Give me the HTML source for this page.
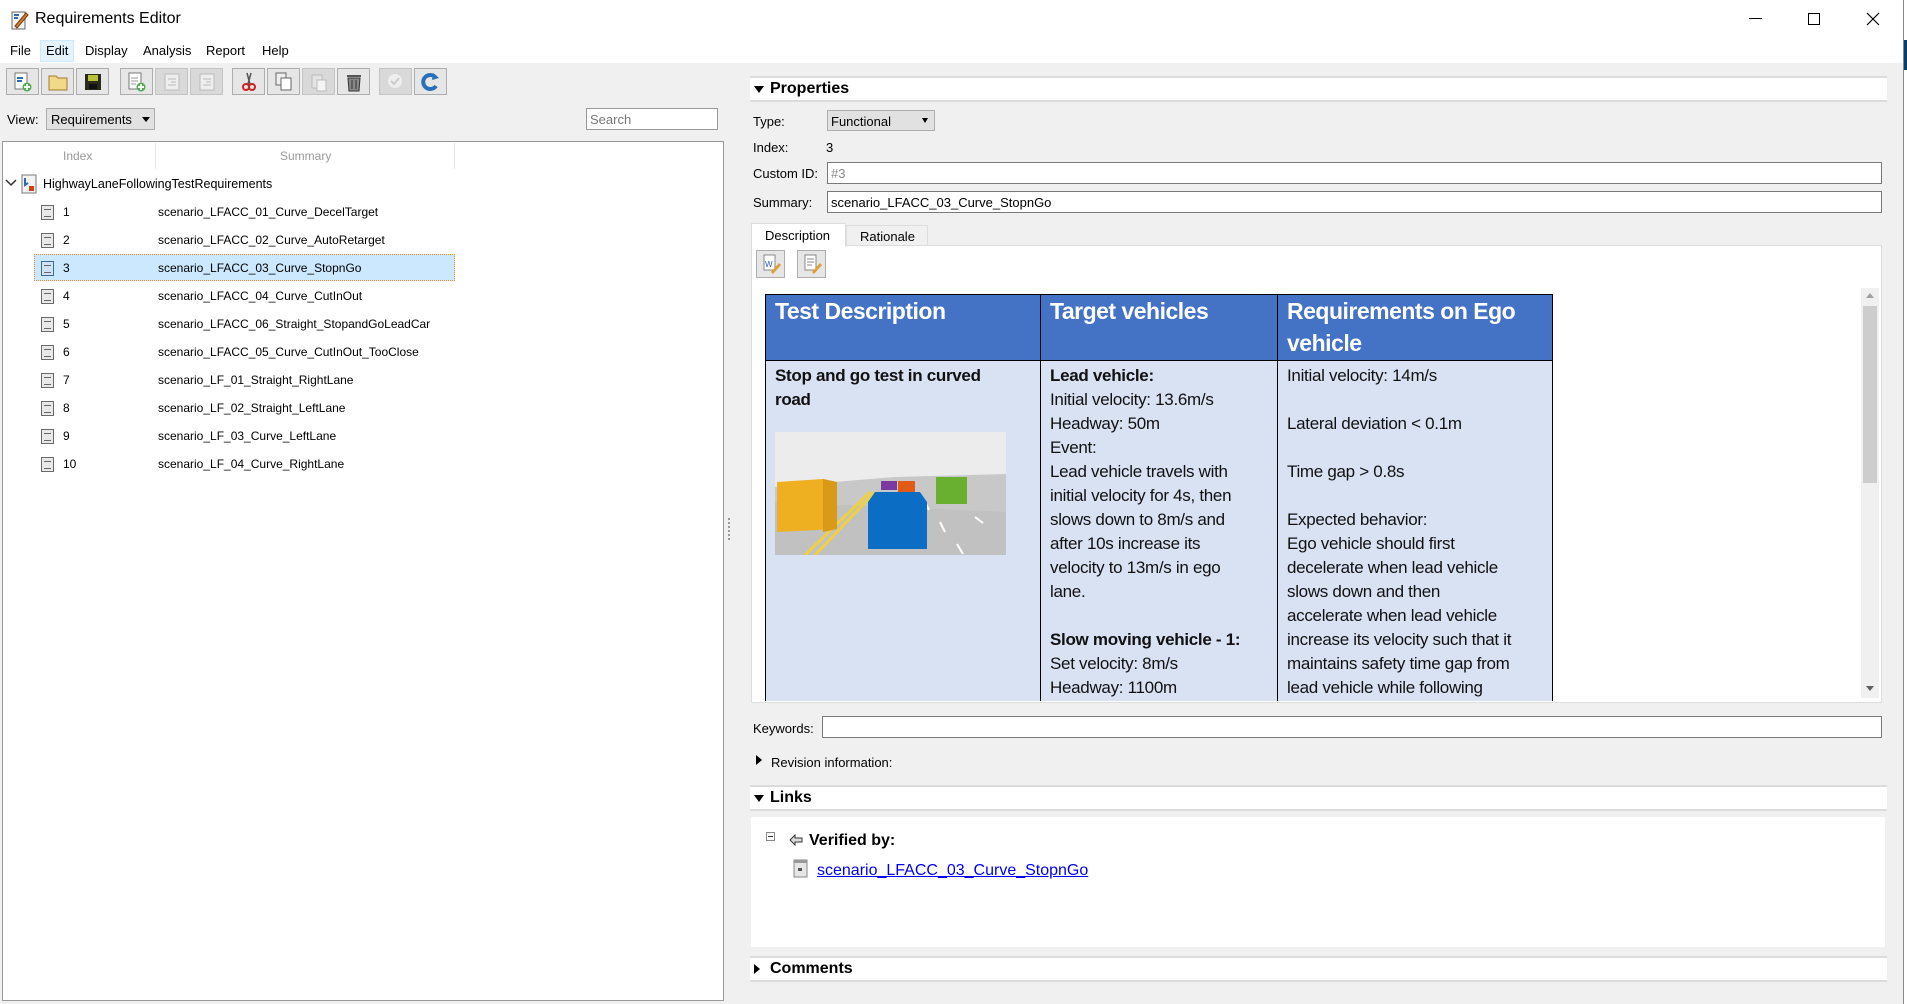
<!DOCTYPE html>
<html><head><meta charset="utf-8"><style>
*{box-sizing:border-box;margin:0;padding:0}
body{width:1907px;height:1004px;position:relative;overflow:hidden;background:#f0f0f0;font-family:"Liberation Sans",sans-serif;font-size:13px;color:#000}
.a{position:absolute;white-space:nowrap}
.btn{position:absolute;top:68px;width:33px;height:27px;border:1px solid #adadad;background:#e6e6e6}
.btn.d{background:#d9d9d9;border-color:#c4c4c4}
.btn svg{position:absolute;left:6px;top:3px}
.row{position:absolute;left:0;height:28px;width:720px;font-size:12px}
.row .ic{position:absolute;left:41px;top:7px;width:13px;height:15px;background:#e8e8e8;border:1px solid #6b6b6b}
.row .ic:after{content:"";position:absolute;left:2px;top:3px;width:7px;height:6px;border-top:1px solid #666;border-bottom:1px solid #666}
.row .n{position:absolute;left:63px;top:7px}
.row .s{position:absolute;left:158px;top:7px}
.inp{position:absolute;background:#fff;border:1px solid #7a7a7a}
.band{position:absolute;left:750px;width:1137px;height:26px;background:#fff;border-top:2px solid #dcdcdc;border-bottom:2px solid #dcdcdc;font-weight:bold;font-size:16px}
.tri{position:absolute;width:0;height:0}
td{vertical-align:top}
.tb{font-size:17px;line-height:24px;color:#111;letter-spacing:-0.3px}
</style></head><body>
<div class="a" style="left:0;top:0;width:1903px;height:63px;background:#fff"></div>
<div class="a" style="left:1903px;top:0;width:4px;height:1004px;background:#fff;border-left:1px solid #888"></div>
<div class="a" style="left:1904px;top:40px;width:3px;height:30px;background:#0b3d6b"></div>
<svg class="a" style="left:10px;top:9px" width="20" height="22"><rect x="2" y="3" width="13" height="17" fill="#f4f4f4" stroke="#666"/><path d="M5 17 L16 4 L18 6 L7 19Z" fill="#d08030" stroke="#7a3a10"/><path d="M4 6 L9 6 M4 9 L8 9" stroke="#2a6ac0" stroke-width="2"/></svg>
<div class="a" style="left:35px;top:10px;font-size:16px">Requirements Editor</div>
<div class="a" style="left:1749px;top:18px;width:13px;height:1px;background:#000"></div>
<div class="a" style="left:1808px;top:13px;width:12px;height:12px;border:1px solid #000"></div>
<svg class="a" style="left:1866px;top:12px" width="14" height="14"><path d="M1 1L13 13M13 1L1 13" stroke="#000" stroke-width="1.2"/></svg>
<div class="a" style="left:40px;top:40px;width:34px;height:22px;background:#e5f3ff;border:1px solid #cce8ff"></div>
<div class="a" style="left:10px;top:43px;font-size:13px">File</div>
<div class="a" style="left:46px;top:43px;font-size:13px">Edit</div>
<div class="a" style="left:85px;top:43px;font-size:13px">Display</div>
<div class="a" style="left:143px;top:43px;font-size:13px">Analysis</div>
<div class="a" style="left:206px;top:43px;font-size:13px">Report</div>
<div class="a" style="left:262px;top:43px;font-size:13px">Help</div>
<div class="btn" style="left:6px"><svg width="20" height="20"><rect x="2" y="1" width="12" height="16" fill="#fff" stroke="#777"/><path d="M4 6h6M4 9h5" stroke="#2a6ac0" stroke-width="2"/><circle cx="14" cy="15" r="4.5" fill="#4caf50"/><path d="M14 12v6M11 15h6" stroke="#fff" stroke-width="2"/></svg></div>
<div class="btn" style="left:41px"><svg width="20" height="20"><path d="M1 4h7l2 2h9v12H1z" fill="#f2d98a" stroke="#a07a30"/></svg></div>
<div class="btn" style="left:76px"><svg width="20" height="20"><rect x="2" y="2" width="16" height="16" fill="#2b2b1a"/><rect x="5" y="3" width="10" height="6" fill="#b8c040"/><rect x="6" y="12" width="8" height="5" fill="#111"/></svg></div>
<div class="btn" style="left:120px"><svg width="20" height="20"><rect x="2" y="1" width="12" height="16" fill="#fff" stroke="#777"/><path d="M4 6h7M4 9h7M4 12h5" stroke="#999"/><circle cx="14" cy="15" r="4.5" fill="#4caf50"/><path d="M14 12v6M11 15h6" stroke="#fff" stroke-width="2"/></svg></div>
<div class="btn d" style="left:155px"><svg width="20" height="20"><rect x="3" y="2" width="14" height="16" fill="#eee" stroke="#bbb"/><path d="M6 7h8M9 10h5M6 13h8" stroke="#bbb"/></svg></div>
<div class="btn d" style="left:190px"><svg width="20" height="20"><rect x="3" y="2" width="14" height="16" fill="#eee" stroke="#bbb"/><path d="M6 7h8M9 10h5M6 13h8" stroke="#bbb"/></svg></div>
<div class="btn" style="left:232px"><svg width="20" height="20"><path d="M8 1L11 12M12 1L9 12" stroke="#555" stroke-width="1.5"/><circle cx="7" cy="15" r="3" fill="none" stroke="#c22" stroke-width="2"/><circle cx="13" cy="15" r="3" fill="none" stroke="#c22" stroke-width="2"/></svg></div>
<div class="btn" style="left:267px"><svg width="20" height="20"><rect x="2" y="1" width="10" height="12" fill="#eee" stroke="#666"/><rect x="7" y="6" width="10" height="12" fill="#fff" stroke="#666"/></svg></div>
<div class="btn d" style="left:302px"><svg width="20" height="20"><rect x="3" y="3" width="10" height="13" fill="#e4e4e4" stroke="#bbb"/><rect x="8" y="8" width="9" height="11" fill="#f4f4f4" stroke="#bbb"/></svg></div>
<div class="btn" style="left:337px"><svg width="20" height="20"><rect x="3" y="3" width="14" height="2" fill="#555"/><path d="M4 6h12l-1 13H5z" fill="#888" stroke="#333"/><path d="M8 8v9M12 8v9" stroke="#333"/></svg></div>
<div class="btn d" style="left:379px"><svg width="20" height="20"><circle cx="9" cy="9" r="7" fill="#eee"/><path d="M5 9l3 3 5-6" stroke="#ccc" stroke-width="2" fill="none"/></svg></div>
<div class="btn" style="left:414px"><svg width="20" height="20"><path d="M15 6A7 7 0 1 0 15 14" stroke="#2a70b8" stroke-width="4" fill="none"/><path d="M12 1l6 5-7 2z" fill="#2a70b8"/></svg></div>
<div class="a" style="left:7px;top:112px">View:</div>
<div class="a" style="left:46px;top:108px;width:109px;height:22px;background:#e1e1e1;border:1px solid #adadad"></div>
<div class="a" style="left:51px;top:112px">Requirements</div>
<div class="tri a" style="left:142px;top:117px;border-left:4px solid transparent;border-right:4px solid transparent;border-top:5px solid #000"></div>
<div class="inp" style="left:586px;top:108px;width:132px;height:22px;border-color:#999"></div>
<div class="a" style="left:590px;top:112px;color:#777">Search</div>
<div class="a" style="left:2px;top:141px;width:722px;height:860px;background:#fff;border:1px solid #999"></div>
<div class="a" style="left:155px;top:143px;width:1px;height:26px;background:#e5e5e5"></div>
<div class="a" style="left:454px;top:143px;width:1px;height:26px;background:#e5e5e5"></div>
<div class="a" style="left:63px;top:149px;color:#999;font-size:12px">Index</div>
<div class="a" style="left:280px;top:149px;color:#999;font-size:12px">Summary</div>
<svg class="a" style="left:5px;top:178px" width="12" height="10"><path d="M1 2l5 5 5-5" stroke="#333" stroke-width="1.5" fill="none"/></svg>
<svg class="a" style="left:21px;top:174px" width="18" height="20"><rect x="1" y="1" width="14" height="18" fill="#f4f4f4" stroke="#777"/><path d="M4 4v7l3-2" stroke="#2a6ac0" stroke-width="2" fill="none"/><rect x="8" y="12" width="5" height="5" fill="#d04010"/></svg>
<div class="a" style="left:43px;top:177px;font-size:12.5px">HighwayLaneFollowingTestRequirements</div>
<div class="a" style="left:34px;top:254px;width:421px;height:27px;background:#cce8ff;border:1px dotted #e08a30"></div>
<div class="row" style="top:198px"><div class="ic"></div><span class="n">1</span><span class="s">scenario_LFACC_01_Curve_DecelTarget</span></div>
<div class="row" style="top:226px"><div class="ic"></div><span class="n">2</span><span class="s">scenario_LFACC_02_Curve_AutoRetarget</span></div>
<div class="row" style="top:254px"><div class="ic" style="background:#cfe3f5;border-color:#3a6a9a"></div><span class="n">3</span><span class="s">scenario_LFACC_03_Curve_StopnGo</span></div>
<div class="row" style="top:282px"><div class="ic"></div><span class="n">4</span><span class="s">scenario_LFACC_04_Curve_CutInOut</span></div>
<div class="row" style="top:310px"><div class="ic"></div><span class="n">5</span><span class="s">scenario_LFACC_06_Straight_StopandGoLeadCar</span></div>
<div class="row" style="top:338px"><div class="ic"></div><span class="n">6</span><span class="s">scenario_LFACC_05_Curve_CutInOut_TooClose</span></div>
<div class="row" style="top:366px"><div class="ic"></div><span class="n">7</span><span class="s">scenario_LF_01_Straight_RightLane</span></div>
<div class="row" style="top:394px"><div class="ic"></div><span class="n">8</span><span class="s">scenario_LF_02_Straight_LeftLane</span></div>
<div class="row" style="top:422px"><div class="ic"></div><span class="n">9</span><span class="s">scenario_LF_03_Curve_LeftLane</span></div>
<div class="row" style="top:450px"><div class="ic"></div><span class="n">10</span><span class="s">scenario_LF_04_Curve_RightLane</span></div>
<div class="a" style="left:728px;top:518px;width:2px;height:22px;border-left:2px dotted #999"></div>
<div class="band" style="top:76px"><div class="tri a" style="left:4px;top:8px;border-left:5px solid transparent;border-right:5px solid transparent;border-top:7px solid #000"></div><span class="a" style="left:20px;top:2px">Properties</span></div>
<div class="a" style="left:753px;top:114px">Type:</div>
<div class="a" style="left:827px;top:110px;width:108px;height:21px;background:#e1e1e1;border:1px solid #adadad"></div>
<div class="a" style="left:831px;top:114px">Functional</div>
<div class="tri a" style="left:922px;top:118px;border-left:3px solid transparent;border-right:3px solid transparent;border-top:5px solid #000"></div>
<div class="a" style="left:753px;top:140px">Index:</div>
<div class="a" style="left:826px;top:140px">3</div>
<div class="a" style="left:753px;top:166px">Custom ID:</div>
<div class="inp" style="left:827px;top:162px;width:1055px;height:22px"></div>
<div class="a" style="left:831px;top:166px;color:#888">#3</div>
<div class="a" style="left:753px;top:195px">Summary:</div>
<div class="inp" style="left:827px;top:191px;width:1055px;height:22px"></div>
<div class="a" style="left:831px;top:195px">scenario_LFACC_03_Curve_StopnGo</div>
<div class="a" style="left:751px;top:245px;width:1131px;height:458px;background:#fff;border:1px solid #ddd"></div>
<div class="a" style="left:751px;top:223px;width:95px;height:24px;background:#fff;border:1px solid #ddd;border-bottom:none"></div>
<div class="a" style="left:846px;top:225px;width:82px;height:21px;background:#f0f0f0;border:1px solid #ddd"></div>
<div class="a" style="left:765px;top:228px">Description</div>
<div class="a" style="left:860px;top:229px">Rationale</div>
<div class="a" style="left:756px;top:250px;width:29px;height:28px;background:#e6e6e6;border:1px solid #adadad"></div>
<div class="a" style="left:797px;top:250px;width:29px;height:28px;background:#e6e6e6;border:1px solid #adadad"></div>
<svg class="a" style="left:762px;top:253px" width="20" height="22"><rect x="2" y="2" width="11" height="15" fill="#fff" stroke="#888"/><text x="3" y="14" font-size="8" fill="#2a5ab8" font-family="Liberation Sans">W</text><path d="M9 19l8-9 2 2-8 9z" fill="#e0a030"/></svg>
<svg class="a" style="left:803px;top:253px" width="20" height="22"><rect x="2" y="2" width="11" height="15" fill="#fff" stroke="#888"/><path d="M4 6h7M4 9h7M4 12h5" stroke="#888"/><path d="M9 19l8-9 2 2-8 9z" fill="#e0a030"/></svg>
<div class="a" style="left:1861px;top:288px;width:18px;height:410px;background:#f0f0f0"></div>
<div class="a" style="left:1863px;top:306px;width:14px;height:177px;background:#cdcdcd"></div>
<div class="tri a" style="left:1866px;top:293px;border-left:4px solid transparent;border-right:4px solid transparent;border-bottom:5px solid #a0a0a0"></div>
<div class="tri a" style="left:1866px;top:686px;border-left:4px solid transparent;border-right:4px solid transparent;border-top:5px solid #606060"></div>
<div class="a" style="left:765px;top:294px;width:788px;height:407px;overflow:hidden">
<table style="border-collapse:collapse;width:787px;table-layout:fixed">
<colgroup><col style="width:275px"><col style="width:237px"><col style="width:275px"></colgroup>
<tr style="background:#4472c4;color:#fff;font-weight:bold;font-size:23px;line-height:32px;height:66px">
<td style="border:1px solid #000;padding:0 9px;letter-spacing:-0.5px">Test Description</td>
<td style="border:1px solid #000;padding:0 9px;letter-spacing:-0.5px">Target vehicles</td>
<td style="border:1px solid #000;padding:0 9px;letter-spacing:-0.5px">Requirements on Ego<br>vehicle</td></tr>
<tr style="background:#d9e2f3;height:400px">
<td class="tb" style="border:1px solid #000;padding:3px 9px"><b>Stop and go test in curved<br>road</b><br>
<svg style="margin-top:20px" width="231" height="123"><rect width="231" height="123" fill="#ececec"/><path d="M0 55 L120 45 L231 42 L231 123 L0 123Z" fill="#c8c8c8"/><path d="M0 70 L231 80 L231 123 L0 123Z" fill="#bdbdbd" opacity=".6"/><path d="M30 123 L95 60 M40 123 L100 60" stroke="#f0d040" stroke-width="3"/><path d="M150 70l4 8M165 90l5 10M182 112l6 10M200 85l8 6" stroke="#fff" stroke-width="2"/><path d="M2 50 L48 47 L62 50 L62 97 L2 100Z" fill="#eeb020"/><path d="M48 47 L62 50 L62 97 L48 100Z" fill="#d99a18"/><path d="M100 60 L145 60 L152 70 L152 117 L93 117 L93 70Z" fill="#0b6ec4"/><rect x="106" y="49" width="16" height="9" fill="#7b3aa0"/><rect x="123" y="49" width="17" height="11" fill="#e05a18"/><rect x="161" y="45" width="31" height="27" fill="#6ab030"/></svg></td>
<td class="tb" style="border:1px solid #000;padding:3px 9px"><b>Lead vehicle:</b><br>Initial velocity: 13.6m/s<br>Headway: 50m<br>Event:<br>Lead vehicle travels with<br>initial velocity for 4s, then<br>slows down to 8m/s and<br>after 10s increase its<br>velocity to 13m/s in ego<br>lane.<br><br><b>Slow moving vehicle - 1:</b><br>Set velocity: 8m/s<br>Headway: 1100m</td>
<td class="tb" style="border:1px solid #000;padding:3px 9px">Initial velocity: 14m/s<br><br>Lateral deviation &lt; 0.1m<br><br>Time gap &gt; 0.8s<br><br>Expected behavior:<br>Ego vehicle should first<br>decelerate when lead vehicle<br>slows down and then<br>accelerate when lead vehicle<br>increase its velocity such that it<br>maintains safety time gap from<br>lead vehicle while following</td></tr>
</table></div>
<div class="a" style="left:753px;top:721px">Keywords:</div>
<div class="inp" style="left:822px;top:716px;width:1060px;height:22px"></div>
<div class="tri a" style="left:756px;top:755px;border-top:5px solid transparent;border-bottom:5px solid transparent;border-left:6px solid #000"></div>
<div class="a" style="left:771px;top:755px">Revision information:</div>
<div class="band" style="top:785px"><div class="tri a" style="left:4px;top:8px;border-left:5px solid transparent;border-right:5px solid transparent;border-top:7px solid #000"></div><span class="a" style="left:20px;top:2px">Links</span></div>
<div class="a" style="left:751px;top:817px;width:1134px;height:130px;background:#fff"></div>
<div class="a" style="left:766px;top:832px;width:9px;height:9px;border:1px solid #888;background:#fff"></div>
<div class="a" style="left:768px;top:836px;width:5px;height:1px;background:#333"></div>
<svg class="a" style="left:789px;top:834px" width="14" height="12"><path d="M1 6l5-5v3h7v4H6v3z" fill="#ddd" stroke="#333"/></svg>
<div class="a" style="left:809px;top:832px;font-size:16px;font-weight:bold">Verified by:</div>
<svg class="a" style="left:793px;top:859px" width="16" height="19"><rect x="1" y="1" width="13" height="17" fill="#e6e6e6" stroke="#888"/><rect x="1" y="1" width="13" height="3" fill="#999"/><rect x="5" y="9" width="4" height="3" fill="#555"/></svg>
<div class="a" style="left:817px;top:862px;font-size:16px;color:#00e;text-decoration:underline">scenario_LFACC_03_Curve_StopnGo</div>
<div class="band" style="top:956px"><div class="tri a" style="left:4px;top:6px;border-top:5px solid transparent;border-bottom:5px solid transparent;border-left:6px solid #000"></div><span class="a" style="left:20px;top:2px">Comments</span></div>
</body></html>
